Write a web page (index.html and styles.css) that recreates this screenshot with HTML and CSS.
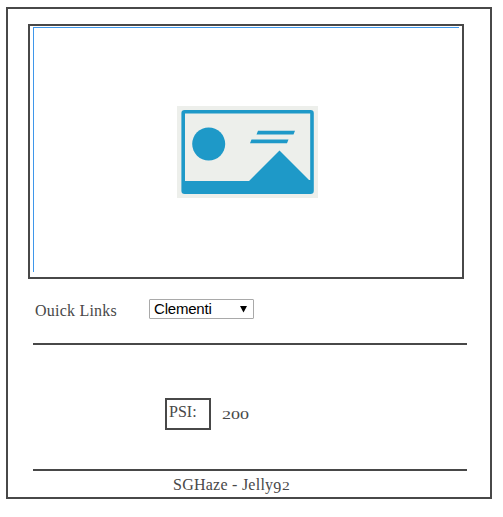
FILE: index.html
```
<!DOCTYPE html>
<html lang="en">
<head>
<meta charset="utf-8">
<title>SGHaze</title>
<link rel="stylesheet" href="styles.css">
</head>
<body>
<main class="page">
  <div class="picture">
    <div class="picture-inner">
      <svg class="placeholder" width="141" height="92" viewBox="0 0 141 92">
        <rect width="141" height="92" fill="#edefeb"/>
        <rect x="6.2" y="5.7" width="128.8" height="80.6" rx="1.5" fill="none" stroke="#1e99c8" stroke-width="3.6"/>
        <path d="M5 75H72L102.500 44.500L132 74H136V87H5Z" fill="#1e99c8"/>
        <circle cx="31.700" cy="38" r="16.500" fill="#1e99c8"/>
        <path d="M81 24.700H118L116.500 28.500H79.500ZM74.500 33.400H111.500L110 37.200H73Z" fill="#1e99c8"/>
      </svg>
    </div>
  </div>
  <div class="links">
    <span class="label"><span class="t t-links">Ouick Links</span></span>
    <div class="select"><span>Clementi</span><svg width="7" height="7" viewBox="0 0 7 7"><path d="M0 0H7L3.500 6.500Z"/></svg></div>
  </div>
  <div class="reading">
    <div class="psi"><span class="t t-psi">PSI:</span></div>
    <span class="value">200</span>
  </div>
  <footer class="footer"><span class="t t-foot">SGHaze - Jelly</span><span class="nine">9</span><span class="two">2</span></footer>
</main>
</body>
</html>
```
FILE: styles.css
```
* { box-sizing: border-box; }
body { margin: 7px 0 0 6px; background: #fff; color: #484848; font: 16px/20px "Liberation Serif", Georgia, serif; }
.page { width: 486px; height: 492px; border: 2px solid #484848; padding: 15px 20px 0; }
.picture { width: 436px; height: 255px; border: 2px solid #484848; padding: 1px 3px 5px; }
.picture-inner { width: 426px; height: 245px; border: solid #3f97ea; border-width: 1px 0 0 1px; padding: 78px 0 0 143px; }
.placeholder { display: block; }
.links { display: flex; margin-left: 5px; width: 434px; height: 66px; padding-top: 20px; border-bottom: 2px solid #484848; }
.label { width: 116px; padding: 2px 0 0 2px; }
.t { white-space: nowrap; }
.t-links { letter-spacing: .22px; }
.select { width: 105px; height: 20px; border: 1px solid #a9a9a9; border-radius: 1px; padding: 0 6px 0 4px; display: flex; align-items: center; justify-content: space-between; color: #000; font: 15px/18px "Liberation Sans", Arial, sans-serif; letter-spacing: -.2px; }
.reading { display: flex; margin-left: 5px; width: 434px; height: 126px; padding: 53px 0 0 132px; border-bottom: 2px solid #484848; }
.psi { width: 46px; height: 32px; border: 2px solid #484848; padding: 2px 0 0 2px; }
.value { margin: 7px 0 0 11px; font-size: 12px; transform: scaleX(1.5); transform-origin: left; height: 20px; }
.footer { display: flex; padding: 4px 0 0 145px; }
.t-foot { letter-spacing: .25px; }
.nine { transform: translateY(3px); }
.two { font-size: 12px; transform: translateY(1px) scaleX(1.3); transform-origin: left; margin-left: 1px; }
```
